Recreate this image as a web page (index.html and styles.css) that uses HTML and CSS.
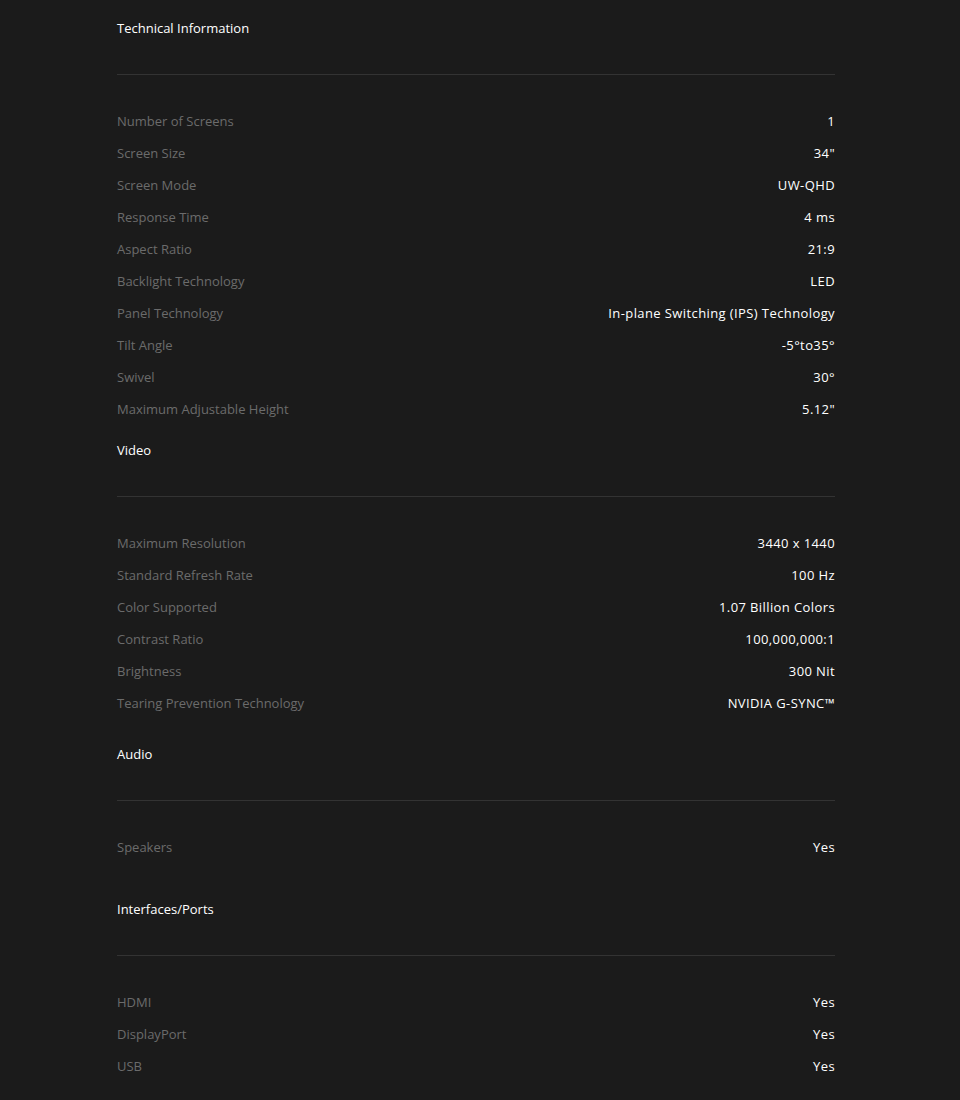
FILE: index.html
```html
<!DOCTYPE html>
<html>

    <head>
        <title>Technical Information</title>
        <link rel="stylesheet" href="styles.css">
    </head>

    <body>
        <div class="specs">
            <section class="spec-group">
                <h2>Technical Information</h2>
                <div class="rows">
                    <div class="row"><span class="label">Number of Screens</span><span class="value">1</span></div>
                    <div class="row"><span class="label">Screen Size</span><span class="value">34"</span></div>
                    <div class="row"><span class="label">Screen Mode</span><span class="value">UW-QHD</span></div>
                    <div class="row"><span class="label">Response Time</span><span class="value">4 ms</span></div>
                    <div class="row"><span class="label">Aspect Ratio</span><span class="value">21:9</span></div>
                    <div class="row"><span class="label">Backlight Technology</span><span class="value">LED</span></div>
                    <div class="row"><span class="label">Panel Technology</span><span class="value">In-plane Switching (IPS) Technology</span></div>
                    <div class="row"><span class="label">Tilt Angle</span><span class="value">-5°to35°</span></div>
                    <div class="row"><span class="label">Swivel</span><span class="value">30°</span></div>
                    <div class="row"><span class="label">Maximum Adjustable Height</span><span class="value">5.12"</span></div>
                </div>
            </section>

            <section class="spec-group video">
                <h2>Video</h2>
                <div class="rows">
                    <div class="row"><span class="label">Maximum Resolution</span><span class="value">3440 x 1440</span></div>
                    <div class="row"><span class="label">Standard Refresh Rate</span><span class="value">100 Hz</span></div>
                    <div class="row"><span class="label">Color Supported</span><span class="value">1.07 Billion Colors</span></div>
                    <div class="row"><span class="label">Contrast Ratio</span><span class="value">100,000,000:1</span></div>
                    <div class="row"><span class="label">Brightness</span><span class="value">300 Nit</span></div>
                    <div class="row"><span class="label">Tearing Prevention Technology</span><span class="value">NVIDIA G-SYNC™</span></div>
                </div>
            </section>

            <section class="spec-group audio">
                <h2>Audio</h2>
                <div class="rows">
                    <div class="row"><span class="label">Speakers</span><span class="value">Yes</span></div>
                </div>
            </section>

            <section class="spec-group ports">
                <h2>Interfaces/Ports</h2>
                <div class="rows">
                    <div class="row"><span class="label">HDMI</span><span class="value">Yes</span></div>
                    <div class="row"><span class="label">DisplayPort</span><span class="value">Yes</span></div>
                    <div class="row"><span class="label">USB</span><span class="value">Yes</span></div>
                </div>
            </section>
        </div>
    </body>

</html>
```

FILE: styles.css
```css
body {
    margin: 0;
    background: #1b1b1b;
    color: #fff;
    font-family: "Open Sans", "Liberation Sans", sans-serif;
    font-size: 13px;
}

.specs {
    width: 718px;
    margin-left: 117px;
    padding-top: 18px;
}

.spec-group h2 {
    margin: 0;
    padding-bottom: 36px;
    border-bottom: 1px solid #333;
    font-size: 13px;
    font-weight: 400;
    line-height: 20px;
    color: #fff;
}

.rows {
    padding-top: 30px;
}

.row {
    display: flex;
    justify-content: space-between;
    align-items: center;
    height: 32px;
}

.label {
    color: #6b6b6b;
}

.value {
    color: #fff;
    letter-spacing: 0.4px;
}

.video {
    margin-top: 15px;
}

.audio {
    margin-top: 25px;
}

.ports {
    margin-top: 36px;
}
```
